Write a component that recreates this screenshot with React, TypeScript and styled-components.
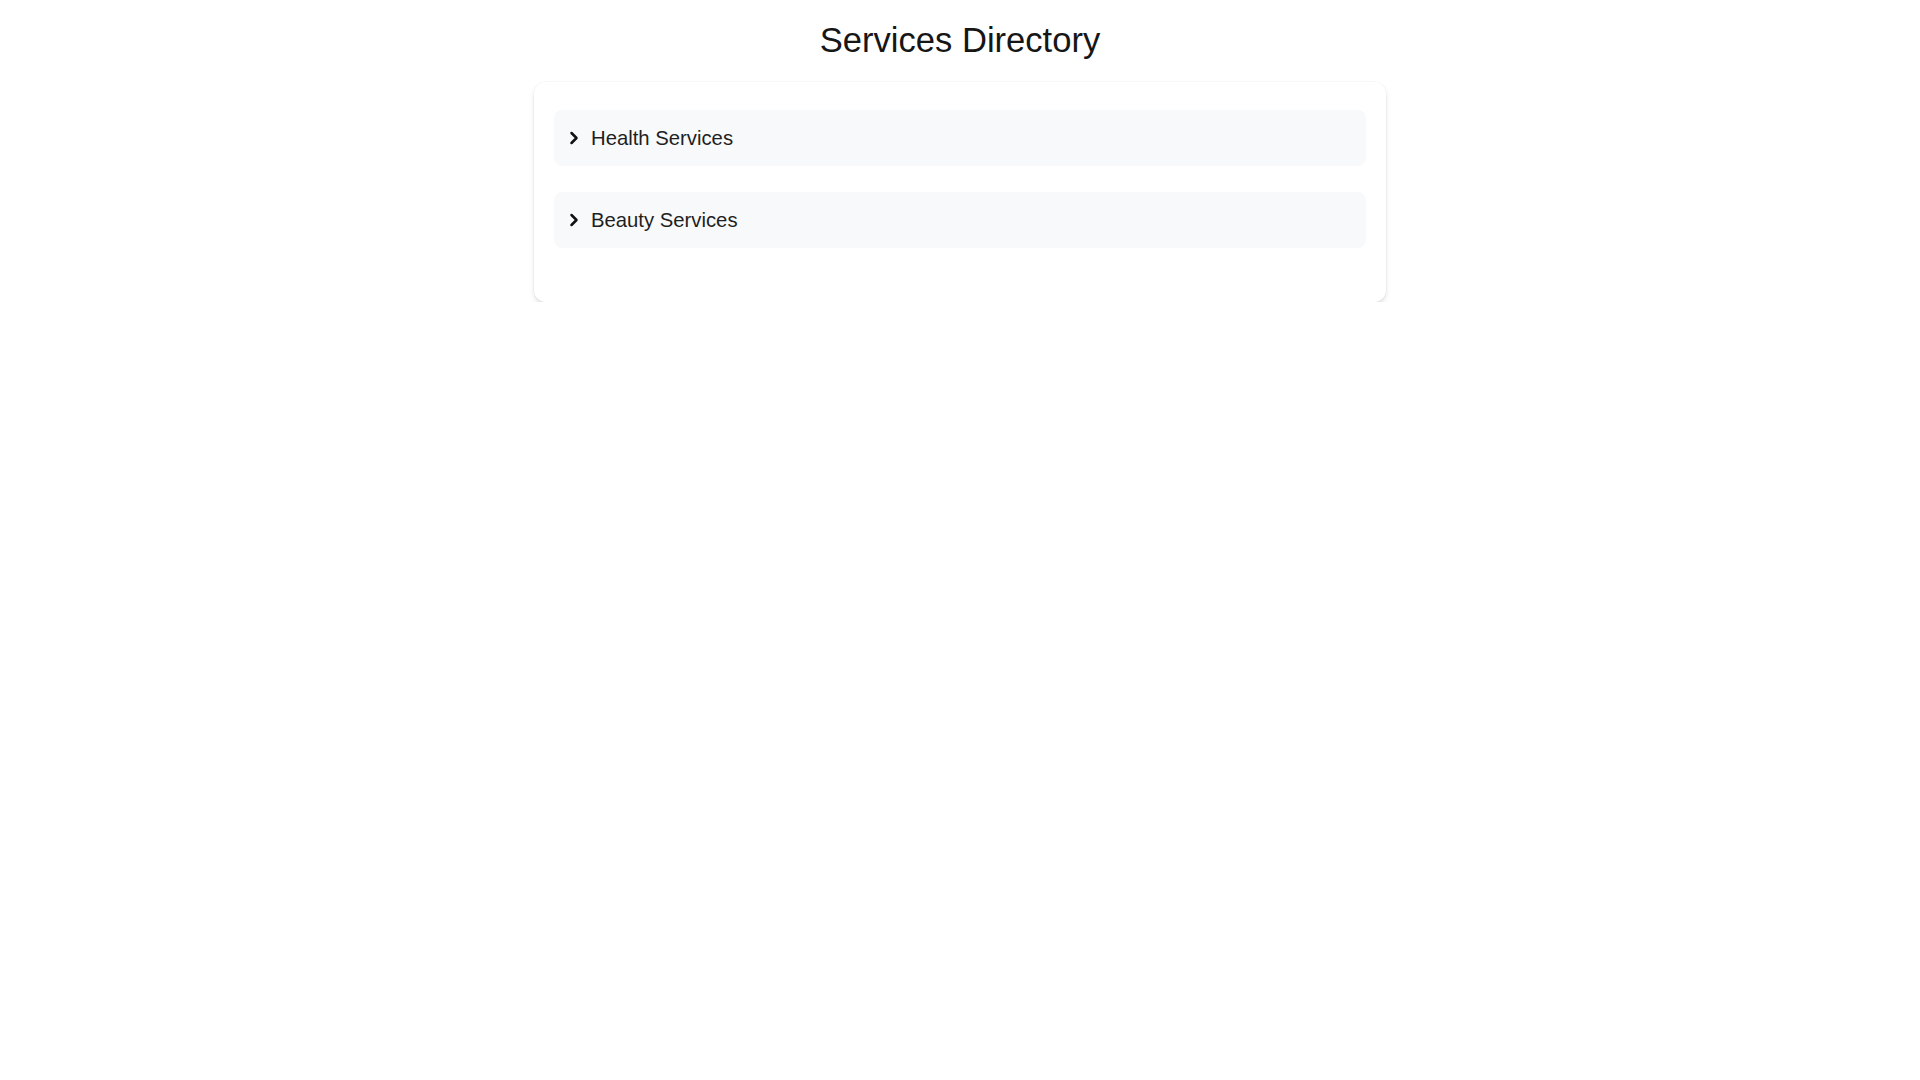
import React from "react";
import styled, { createGlobalStyle } from "styled-components";
import { ChevronRight } from "lucide-react";

const GlobalStyle = createGlobalStyle`
  html, body {
    margin: 0;
    padding: 0;
    background: #ffffff;
  }
  body {
    font-family: "Liberation Sans", Arial, sans-serif;
    color: #1a1a1a;
  }
`;

const Page = styled.main`
  display: flex;
  flex-direction: column;
  align-items: center;
  padding-top: 20px;
`;

const Title = styled.h1`
  margin: 0 0 22px;
  font-size: 34.6px;
  line-height: 40px;
  font-weight: 400;
  color: #161616;
`;

const Card = styled.section`
  box-sizing: border-box;
  width: 852px;
  padding: 28px 20px 54px;
  background: #ffffff;
  border-radius: 12px;
  box-shadow: 0 0 0 1px rgba(0, 0, 0, 0.025), 0 4px 7px -1px rgba(0, 0, 0, 0.11),
    0 2px 4px -2px rgba(0, 0, 0, 0.1);
  display: flex;
  flex-direction: column;
  gap: 26px;
`;

const Row = styled.button`
  box-sizing: border-box;
  display: flex;
  align-items: center;
  gap: 7px;
  width: 100%;
  height: 56px;
  padding: 0 10px;
  border: none;
  border-radius: 8px;
  background: #f8f9fa;
  font-family: "Liberation Sans", Arial, sans-serif;
  font-size: 20.3px;
  color: #1f1f1f;
  text-align: left;
  cursor: pointer;
`;

const Icon = styled.span`
  display: flex;
  width: 20px;
  height: 20px;
  color: #111;
`;

const services = ["Health Services", "Beauty Services"];

export default function App() {
  return (
    <>
      <GlobalStyle />
      <Page>
        <Title>Services Directory</Title>
        <Card>
          {services.map((s) => (
            <Row key={s}>
              <Icon>
                <ChevronRight size={20} strokeWidth={3} />
              </Icon>
              <span>{s}</span>
            </Row>
          ))}
        </Card>
      </Page>
    </>
  );
}
